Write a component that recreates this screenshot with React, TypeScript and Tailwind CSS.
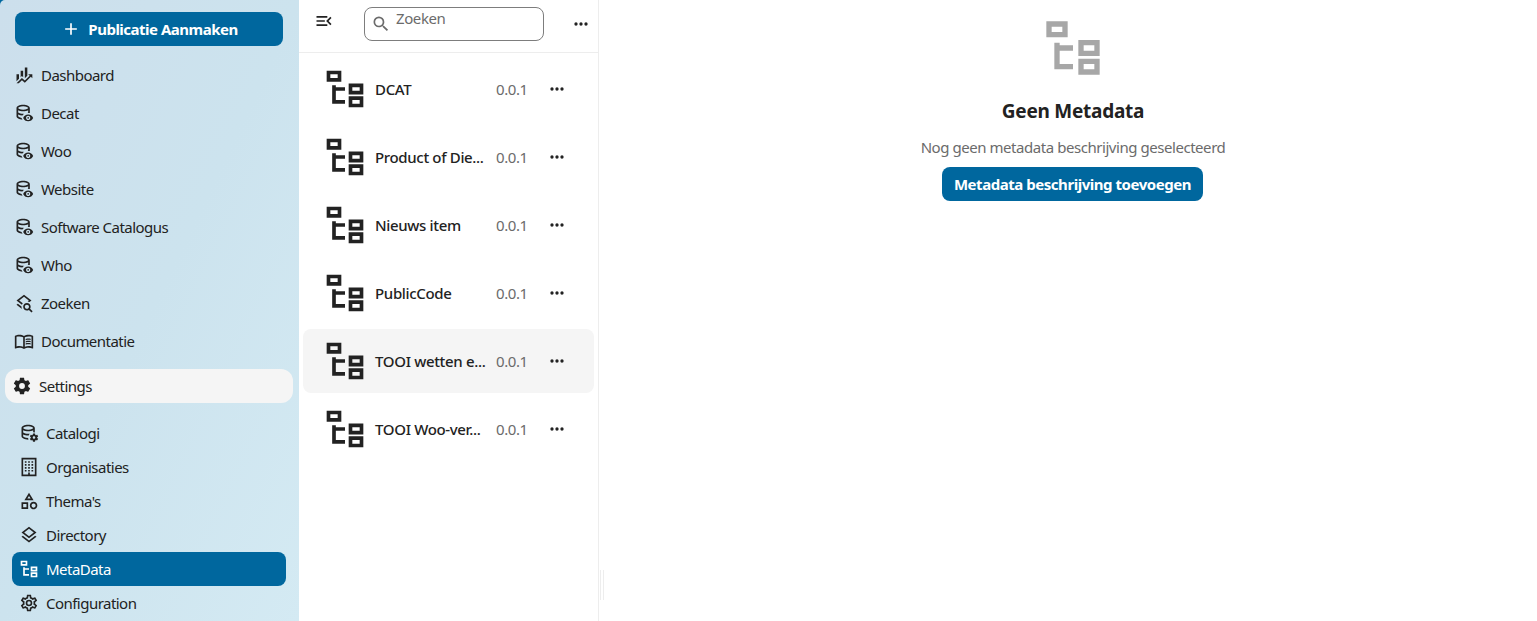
import type { ReactNode } from "react";

const paths = {
  plus: "M19,13H13V19H11V13H5V11H11V5H13V11H19V13Z",
  finance:
    "M6,16.5L3,19.44V11H6M11,14.66L9.43,13.32L8,14.64V7H11M16,13L13,16V3H16M18.81,12.81L17,11H22V16L20.21,14.21L13,21.36L9.53,18.34L5.75,22H3L9.47,15.66L13,18.64",
  databaseEye:
    "M17 16.88C17.56 16.88 18 17.32 18 17.88S17.56 18.88 17 18.88 16 18.43 16 17.88 16.44 16.88 17 16.88M17 13.88C19.73 13.88 22.06 15.54 23 17.88C22.06 20.22 19.73 21.88 17 21.88S11.94 20.22 11 17.88C11.94 15.54 14.27 13.88 17 13.88M17 15.38C15.62 15.38 14.5 16.5 14.5 17.88S15.62 20.38 17 20.38 19.5 19.26 19.5 17.88 18.38 15.38 17 15.38M11 2C6.58 2 3 3.79 3 6V16C3 18.1 6.21 19.8 10.3 20C9.8 19.4 9.4 18.7 9.1 17.88C6.5 17.5 5 16.4 5 16V13.77C6.4 14.5 8.2 14.9 10.1 15C10.6 14.3 11.1 13.7 11.8 13.1C11.5 13 11.3 13 11 13C8.58 13 6.3 12.4 5 11.45V8.64C6.47 9.47 8.61 10 11 10C13.39 10 15.53 9.47 17 8.64V11.45L16.3 11.9L17 11.88C17.7 11.88 18.35 11.96 19 12.12V6C19 3.79 15.42 2 11 2M11 8C7.13 8 5 6.5 5 6S7.13 4 11 4 17 5.5 17 6 14.87 8 11 8Z",
  databaseCog:
    "M11 2C6.58 2 3 3.79 3 6V16C3 18.21 6.59 20 11 20L11.3 20C11.1 19.4 11 18.7 11 18C7.13 18 5 16.5 5 16V13.77C6.61 14.55 8.72 15 11 15L11.7 15C12 14.3 12.4 13.6 12.9 13L11 13C8.58 13 6.3 12.4 5 11.45V8.64C6.47 9.47 8.61 10 11 10C13.39 10 15.53 9.47 17 8.64V11L19 11.3V6C19 3.79 15.42 2 11 2M11 8C7.13 8 5 6.5 5 6S7.13 4 11 4 17 5.5 17 6 14.87 8 11 8M21.8 18V17L22.9 16.2C23 16.1 23 16 22.9 15.9L21.9 14.2C21.9 14.1 21.7 14 21.6 14.1L20.4 14.6C20.1 14.4 19.8 14.2 19.5 14.1L19.3 12.8C19.3 12.7 19.1 12.6 19 12.6H17C16.9 12.6 16.8 12.7 16.7 12.8L16.5 14.1C16.2 14.2 15.9 14.4 15.6 14.6L14.4 14.1C14.3 14.1 14.2 14.1 14.1 14.2L13.1 15.9C13 16 13.1 16.1 13.2 16.2L14.2 17V18L13.2 18.8C13.1 18.9 13 19 13.1 19.1L14.1 20.8C14.2 20.9 14.3 20.9 14.4 20.9L15.6 20.4C15.9 20.6 16.2 20.8 16.5 20.9L16.7 22.2C16.8 22.3 16.9 22.4 17 22.4H19C19.1 22.4 19.3 22.3 19.3 22.2L19.5 20.9C19.8 20.8 20.1 20.6 20.4 20.4L21.6 20.9C21.7 20.9 21.9 20.9 21.9 20.8L22.9 19.1C23 19 23 18.9 22.9 18.8L21.8 18M18 19C17.2 19 16.5 18.3 16.5 17.5S17.2 16 18 16 19.5 16.7 19.5 17.5 18.8 19 18 19Z",
  layersSearch:
    "M19.31 18.9C19.75 18.21 20 17.38 20 16.5C20 14 18 12 15.5 12S11 14 11 16.5 13 21 15.5 21C16.37 21 17.19 20.75 17.88 20.32L21 23.39L22.39 22L19.31 18.9M15.5 19C14.12 19 13 17.88 13 16.5S14.12 14 15.5 14 18 15.12 18 16.5 16.88 19 15.5 19M9.59 19.2L3 14.07L4.62 12.81L9 16.22C9 16.32 9 16.41 9 16.5C9 17.46 9.21 18.37 9.59 19.2M9.5 14.04L3 9L12 2L21 9L18.66 10.82C17.96 10.44 17.19 10.18 16.37 10.07L17.74 9L12 4.53L6.26 9L10.53 12.32C10.12 12.84 9.77 13.41 9.5 14.04Z",
  book: "M12 21.5C10.65 20.65 8.2 20 6.5 20C4.85 20 3.15 20.3 1.75 21.05C1.65 21.1 1.6 21.1 1.5 21.1C1.25 21.1 1 20.85 1 20.6V6C1.6 5.55 2.25 5.25 3 5C4.11 4.65 5.33 4.5 6.5 4.5C8.45 4.5 10.55 4.9 12 6C13.45 4.9 15.55 4.5 17.5 4.5C18.67 4.5 19.89 4.65 21 5C21.75 5.25 22.4 5.55 23 6V20.6C23 20.85 22.75 21.1 22.5 21.1C22.4 21.1 22.35 21.1 22.25 21.05C20.85 20.3 19.15 20 17.5 20C15.8 20 13.35 20.65 12 21.5M11 7.5C9.64 6.9 7.84 6.5 6.5 6.5C5.3 6.5 4.1 6.65 3 7V18.5C4.1 18.15 5.3 18 6.5 18C7.84 18 9.64 18.4 11 19V7.5M13 19C14.36 18.4 16.16 18 17.5 18C18.7 18 19.9 18.15 21 18.5V7C19.9 6.65 18.7 6.5 17.5 6.5C16.16 6.5 14.36 6.9 13 7.5V19M14 16.35C14.96 16 16.12 15.83 17.5 15.83C18.54 15.83 19.38 15.91 20 16.07V14.57C19.13 14.41 18.29 14.33 17.5 14.33C16.16 14.33 15 14.5 14 14.76V16.35M14 13.69C14.96 13.34 16.12 13.16 17.5 13.16C18.54 13.16 19.38 13.24 20 13.4V11.9C19.13 11.74 18.29 11.66 17.5 11.66C16.22 11.66 15.05 11.82 14 12.15V13.69M14 11C14.96 10.67 16.12 10.5 17.5 10.5C18.41 10.5 19.26 10.59 20 10.78V9.23C19.13 9.08 18.29 9 17.5 9C16.18 9 15 9.15 14 9.46V11Z",
  cog: "M12,15.5A3.5,3.5 0 0,1 8.5,12A3.5,3.5 0 0,1 12,8.5A3.5,3.5 0 0,1 15.5,12A3.5,3.5 0 0,1 12,15.5M19.43,12.97C19.47,12.65 19.5,12.33 19.5,12C19.5,11.67 19.47,11.34 19.43,11L21.54,9.37C21.73,9.22 21.78,8.95 21.66,8.73L19.66,5.27C19.54,5.05 19.27,4.96 19.05,5.05L16.56,6.05C16.04,5.66 15.5,5.32 14.87,5.07L14.5,2.42C14.46,2.18 14.25,2 14,2H10C9.75,2 9.54,2.18 9.5,2.42L9.13,5.07C8.5,5.32 7.96,5.66 7.44,6.05L4.95,5.05C4.73,4.96 4.46,5.05 4.34,5.27L2.34,8.73C2.21,8.95 2.27,9.22 2.46,9.37L4.57,11C4.53,11.34 4.5,11.67 4.5,12C4.5,12.33 4.53,12.65 4.57,12.97L2.46,14.63C2.27,14.78 2.21,15.05 2.34,15.27L4.34,18.73C4.46,18.95 4.73,19.03 4.95,18.95L7.44,17.94C7.96,18.34 8.5,18.68 9.13,18.93L9.5,21.58C9.54,21.82 9.75,22 10,22H14C14.25,22 14.46,21.82 14.5,21.58L14.87,18.93C15.5,18.67 16.04,18.34 16.56,17.94L19.05,18.95C19.27,19.03 19.54,18.95 19.66,18.73L21.66,15.27C21.78,15.05 21.73,14.78 21.54,14.63L19.43,12.97Z",
  cogOutline:
    "M12,8A4,4 0 0,1 16,12A4,4 0 0,1 12,16A4,4 0 0,1 8,12A4,4 0 0,1 12,8M12,10A2,2 0 0,0 10,12A2,2 0 0,0 12,14A2,2 0 0,0 14,12A2,2 0 0,0 12,10M10,22C9.75,22 9.54,21.82 9.5,21.58L9.13,18.93C8.5,18.68 7.96,18.34 7.44,17.94L4.95,18.95C4.73,19.03 4.46,18.95 4.34,18.73L2.34,15.27C2.21,15.05 2.27,14.78 2.46,14.63L4.57,12.97L4.5,12L4.57,11L2.46,9.37C2.27,9.22 2.21,8.95 2.34,8.73L4.34,5.27C4.46,5.05 4.73,4.96 4.95,5.05L7.44,6.05C7.96,5.66 8.5,5.32 9.13,5.07L9.5,2.42C9.54,2.18 9.75,2 10,2H14C14.25,2 14.46,2.18 14.5,2.42L14.87,5.07C15.5,5.32 16.04,5.66 16.56,6.05L19.05,5.05C19.27,4.96 19.54,5.05 19.66,5.27L21.66,8.73C21.79,8.95 21.73,9.22 21.54,9.37L19.43,11L19.5,12L19.43,13L21.54,14.63C21.73,14.78 21.79,15.05 21.66,15.27L19.66,18.73C19.54,18.95 19.27,19.04 19.05,18.95L16.56,17.95C16.04,18.34 15.5,18.68 14.87,18.93L14.5,21.58C14.46,21.82 14.25,22 14,22H10M11.25,4L10.88,6.61C9.68,6.86 8.62,7.5 7.85,8.39L5.44,7.35L4.69,8.65L6.8,10.2C6.4,11.37 6.4,12.64 6.8,13.8L4.68,15.36L5.43,16.66L7.86,15.62C8.63,16.5 9.68,17.14 10.87,17.38L11.24,20H12.76L13.13,17.39C14.32,17.14 15.37,16.5 16.14,15.62L18.57,16.66L19.32,15.36L17.2,13.81C17.6,12.64 17.6,11.37 17.2,10.2L19.31,8.65L18.56,7.35L16.15,8.39C15.38,7.5 14.32,6.86 13.12,6.62L12.75,4H11.25Z",
  building:
    "M3 1V23H21V1H3M19 21H13V18.5H11V21H5V3H19V21M7 5H9V7H7V5M11 5H13V7H11V5M15 5H17V7H15V5M7 8.5H9V10.5H7V8.5M11 8.5H13V10.5H11V8.5M15 8.5H17V10.5H15V8.5M7 12H9V14H7V12M11 12H13V14H11V12M15 12H17V14H15V12M7 15.5H9V17.5H7V15.5M11 15.5H13V17.5H11V15.5M15 15.5H17V17.5H15V15.5Z",
  shape:
    "M11,13.5V21.5H3V13.5H11M9,15.5H5V19.5H9V15.5M12,2L17.5,11H6.5L12,2M12,5.86L10.08,9H13.92L12,5.86M17.5,13C20,13 22,15 22,17.5C22,20 20,22 17.5,22C15,22 13,20 13,17.5C13,15 15,13 17.5,13M17.5,15A2.5,2.5 0 0,0 15,17.5A2.5,2.5 0 0,0 17.5,20A2.5,2.5 0 0,0 20,17.5A2.5,2.5 0 0,0 17.5,15Z",
  layers:
    "M12,18.54L19.37,12.8L21,14.07L12,21.07L3,14.07L4.62,12.81L12,18.54M12,16L3,9L12,2L21,9L12,16M12,4.53L6.26,9L12,13.47L17.74,9L12,4.53Z",
  tree: "M12,13H7V18H12V20H5V10H7V11H12V13M8,4V6H4V4H8M10,2H2V8H10V2M20,11V13H16V11H20M22,9H14V15H22V9M20,18V20H16V18H20M22,16H14V22H22V16Z",
  menuOpen:
    "M21,15.61L19.59,17L14.58,12L19.59,7L21,8.39L17.44,12L21,15.61M3,6H16V8H3V6M3,13V11H13V13H3M3,18V16H16V18H3Z",
  magnify:
    "M9.5,3A6.5,6.5 0 0,1 16,9.5C16,11.11 15.41,12.59 14.44,13.73L14.71,14H15.5L20.5,19L19,20.5L14,15.5V14.71L13.73,14.44C12.59,15.41 11.11,16 9.5,16A6.5,6.5 0 0,1 3,9.5A6.5,6.5 0 0,1 9.5,3M9.5,5C7,5 5,7 5,9.5C5,12 7,14 9.5,14C12,14 14,12 14,9.5C14,7 12,5 9.5,5Z",
  dots: "M16,12A2,2 0 0,1 18,10A2,2 0 0,1 20,12A2,2 0 0,1 18,14A2,2 0 0,1 16,12M10,12A2,2 0 0,1 12,10A2,2 0 0,1 14,12A2,2 0 0,1 12,14A2,2 0 0,1 10,12M4,12A2,2 0 0,1 6,10A2,2 0 0,1 8,12A2,2 0 0,1 6,14A2,2 0 0,1 4,12Z",
};

type IconName = keyof typeof paths;

function Icon({ name, size = 20 }: { name: IconName; size?: number }) {
  return (
    <svg viewBox="0 0 24 24" width={size} height={size} fill="currentColor" fillRule="evenodd" className="shrink-0">
      <path d={paths[name]} />
    </svg>
  );
}

const mainItems: { icon: IconName; label: string }[] = [
  { icon: "finance", label: "Dashboard" },
  { icon: "databaseEye", label: "Decat" },
  { icon: "databaseEye", label: "Woo" },
  { icon: "databaseEye", label: "Website" },
  { icon: "databaseEye", label: "Software Catalogus" },
  { icon: "databaseEye", label: "Who" },
  { icon: "layersSearch", label: "Zoeken" },
  { icon: "book", label: "Documentatie" },
];

const settingsItems: { icon: IconName; label: string; active?: boolean }[] = [
  { icon: "databaseCog", label: "Catalogi" },
  { icon: "building", label: "Organisaties" },
  { icon: "shape", label: "Thema's" },
  { icon: "layers", label: "Directory" },
  { icon: "tree", label: "MetaData", active: true },
  { icon: "cogOutline", label: "Configuration" },
];

const rows: { name: string; hover?: boolean }[] = [
  { name: "DCAT" },
  { name: "Product of Die..." },
  { name: "Nieuws item" },
  { name: "PublicCode" },
  { name: "TOOI wetten e...", hover: true },
  { name: "TOOI Woo-ver..." },
];

function PrimaryButton({ className, children }: { className: string; children: ReactNode }) {
  return (
    <button className={`flex h-[34px] items-center justify-center rounded-lg bg-[#00679e] font-bold text-white ${className}`}>
      {children}
    </button>
  );
}

function Sidebar() {
  return (
    <div className="w-[299px] shrink-0 bg-[#00679e] tracking-[-0.53px]">
      <nav className="flex h-full flex-col rounded-tl-[5px] bg-linear-to-br from-[#ccdfec] via-[#cce3ee] to-[#d4eaf3] pt-3">
        <PrimaryButton className="ml-[15px] w-[268px] shrink-0 gap-[7px] pl-px tracking-[-0.5px]">
          <Icon name="plus" />
          <span>Publicatie Aanmaken</span>
        </PrimaryButton>
        <ul className="mt-[12px] flex flex-col gap-1 pl-[14px]">
          {mainItems.map((item) => (
            <li key={item.label} className="flex h-[34px] items-center gap-[7px]">
              <Icon name={item.icon} />
              <span>{item.label}</span>
            </li>
          ))}
        </ul>
        <div className="mt-[11px] mr-[6px] ml-[5px] flex h-[34px] shrink-0 items-center gap-[7px] rounded-xl bg-[#f5f5f5] pl-[7px]">
          <Icon name="cog" />
          <span>Settings</span>
        </div>
        <ul className="mt-[13px] mr-[13px] ml-3 flex flex-col">
          {settingsItems.map((item) => (
            <li
              key={item.label}
              className={`flex h-[34px] items-center gap-[7px] rounded-lg pl-[7px] ${item.active ? "bg-[#00679e] text-white" : ""}`}
            >
              <Icon name={item.icon} />
              <span>{item.label}</span>
            </li>
          ))}
        </ul>
      </nav>
    </div>
  );
}

function MetadataList() {
  return (
    <section className="flex w-[300px] shrink-0 flex-col border-r border-[#ededed]">
      <header className="flex h-[53px] shrink-0 border-b border-[#ededed]">
        <button className="mt-[11px] ml-[15px] h-5">
          <Icon name="menuOpen" />
        </button>
        <div className="mt-[7px] ml-[30px] flex h-[34px] w-[180px] rounded-lg border border-[#7d7d7d] pl-[6px] text-[#6b6b6b]">
          <span className="mt-[6px]">
            <Icon name="magnify" />
          </span>
          <span className="ml-[5px] leading-[20px]">Zoeken</span>
        </div>
        <button className="mt-[14px] ml-[27px] h-5">
          <Icon name="dots" />
        </button>
      </header>
      <ul className="mt-1 ml-1 flex w-[291px] flex-col gap-1">
        {rows.map((row) => (
          <li key={row.name} className={`flex h-16 items-center rounded-lg pl-[20px] ${row.hover ? "bg-[#f5f5f5]" : ""}`}>
            <Icon name="tree" size={44} />
            <span className="ml-[8px] w-[115px] font-medium tracking-[-0.34px] whitespace-nowrap">{row.name}</span>
            <span className="ml-[6px] w-[31px] text-[#6b6b6b]">0.0.1</span>
            <button className="ml-[20px]">
              <Icon name="dots" />
            </button>
          </li>
        ))}
      </ul>
    </section>
  );
}

function EmptyDetail() {
  return (
    <main className="flex flex-1">
      <div className="mt-[570px] ml-px h-[30px] w-1 border-x border-[#ededed]" />
      <div className="flex flex-1 flex-col items-center pt-4 pl-[5px]">
        <span className="text-[#a7a7a7]">
          <Icon name="tree" size={64} />
        </span>
        <h2 className="mt-[16px] text-[19px] leading-[30px] font-bold tracking-[-0.25px]">Geen Metadata</h2>
        <p className="mt-[10px] leading-[23px] tracking-[-0.45px] text-[#6b6b6b]">Nog geen metadata beschrijving geselecteerd</p>
        <PrimaryButton className="mt-[8px] mr-px w-[261px] tracking-[-0.46px]">Metadata beschrijving toevoegen</PrimaryButton>
      </div>
    </main>
  );
}

export default function App() {
  return (
    <div className="flex h-[621px] w-[1537px] overflow-hidden bg-white font-['Noto_Sans',sans-serif] text-[15px] tracking-[-0.4px] text-[#222]">
      <Sidebar />
      <MetadataList />
      <EmptyDetail />
    </div>
  );
}
